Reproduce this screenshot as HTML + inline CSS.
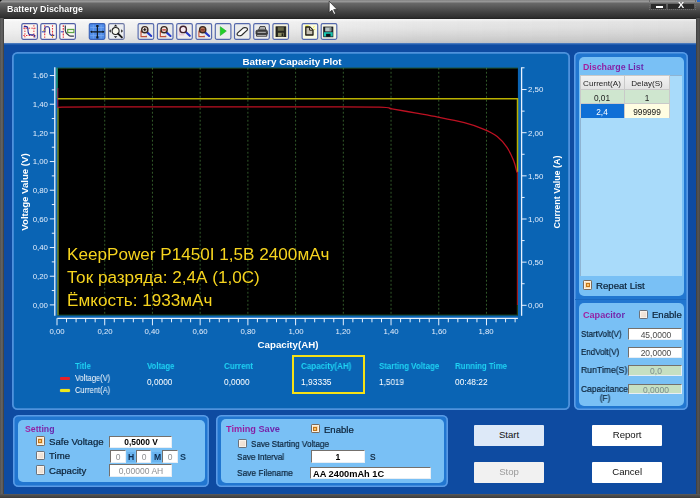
<!DOCTYPE html>
<html lang="en"><head><meta charset="utf-8"><title>Battery Discharge</title>
<style>
html,body{margin:0;padding:0}
body{width:700px;height:498px;overflow:hidden;position:relative;background:#0e4ba1;font-family:"Liberation Sans",sans-serif;font-size:8.2px}
.t{position:absolute;white-space:pre;margin:0;will-change:transform}
.b{position:absolute;box-sizing:border-box}
.p1{position:absolute;box-sizing:border-box;box-shadow:inset 0 0 0 1.8px #4f92dc;border-radius:5.5px;background:#0a64b4}
.p2{position:absolute;box-sizing:border-box;box-shadow:inset 0 0 0 1.6px #5a9be6;border-radius:5.5px;background:#2176d0}
.p3{position:absolute;box-sizing:border-box;border-radius:5px;background:#79c0f5}
.in{position:absolute;box-sizing:border-box;background:#fff;border-top:1.4px solid #74706c;border-left:1.4px solid #74706c;border-bottom:1px solid #e8eef4;border-right:1px solid #e8eef4;text-align:center;white-space:pre}
.cb{position:absolute;box-sizing:border-box;width:9.2px;height:9.3px;border:1.1px solid #6e7279;background:linear-gradient(135deg,#f6ebe2,#ecdccd);border-radius:1.2px;box-shadow:inset 0 0 0 0.8px #fbf6f0}
.cb.on{border-color:#7a6a5a;background:#f8dcae}
.cb.on::after{content:"";position:absolute;left:1.5px;top:1.6px;width:4.1px;height:4.1px;background:#f6c36c;border:1px solid #c47418;box-sizing:border-box}
.btn{position:absolute;box-sizing:border-box;background:#fff;text-align:center;font-size:9.6px;color:#111;border-radius:1px}
svg{position:absolute;left:0;top:0}
</style></head><body>
<div class="b" style="left:0.00px;top:0.00px;width:700.00px;height:18.50px;background:linear-gradient(#808080 0,#9a9a9a 7%,#8c8c8c 11%,#686868 17%,#5e5e5e 30%,#4c4c4c 52%,#3c3c3c 72%,#303030 90%,#202020 100%)"></div>
<div class="b" style="left:0.00px;top:18.00px;width:3.60px;height:480.00px;background:linear-gradient(90deg,#505050,#666 50%,#4a4a4a 85%,#2a2a2a)"></div>
<div class="b" style="left:696.00px;top:18.00px;width:4.00px;height:480.00px;background:linear-gradient(90deg,#3c3c3c,#565656 50%,#444)"></div>
<div class="b" style="left:0.00px;top:494.00px;width:700.00px;height:4.00px;background:linear-gradient(#5a5c60 0,#4e4e4e 30%,#444 70%,#3a3a3a)"></div>
<div class="b" style="left:0.00px;top:0.00px;width:3.00px;height:3.00px;background:radial-gradient(circle at 100% 100%,transparent 2.6px,#111 3.2px)"></div>
<div class="b" style="left:697.00px;top:0.00px;width:3.00px;height:3.00px;background:radial-gradient(circle at 0 100%,transparent 2.6px,#111 3.2px)"></div>
<div class="b" style="left:3.60px;top:18.50px;width:692.40px;height:25.10px;background:linear-gradient(90deg,rgba(255,255,255,0.4) 0,rgba(255,255,255,0.25) 35%,rgba(140,140,140,0.06) 60%,rgba(110,110,110,0.1) 100%),linear-gradient(#fafafa 0,#f8f8f8 4%,#eeeeee 12%,#e9e9e9 35%,#dedede 60%,#d0d0d0 85%,#c2c6cc 96%,#b4c0d2 100%)"></div>
<div class="b" style="left:3.60px;top:43.20px;width:692.40px;height:1.80px;background:linear-gradient(#5a86c4,#0e4ea6)"></div>
<div class="t" style="top:1.60px;line-height:14px;font-size:8.9px;color:#fff;font-weight:bold;left:6.80px;text-shadow:0 0 1px #222">Battery Discharge</div>
<div class="b" style="left:649.00px;top:0.00px;width:47.00px;height:10.20px;border:1px dotted #6c6c6c;border-top:none"></div>
<div class="b" style="left:651.00px;top:3.60px;width:14.50px;height:5.40px;background:#2b2b2b"></div>
<div class="b" style="left:668.00px;top:3.60px;width:25.50px;height:5.40px;background:#2b2b2b"></div>
<div class="b" style="left:655.50px;top:6.00px;width:7.00px;height:2.30px;background:#fff"></div>
<div class="t" style="top:-1.70px;line-height:14px;font-size:9.2px;color:#fff;font-weight:bold;left:580.80px;width:200px;text-align:center;">X</div>
<div class="b" style="left:697.20px;top:0.00px;width:2.80px;height:2.20px;background:#2a6ac8"></div>
<div class="p1" style="left:12.20px;top:51.80px;width:558.20px;height:358.00px;"></div>
<div class="p2" style="left:573.50px;top:52.00px;width:114.00px;height:358.00px;"></div>
<div class="b" style="left:575.00px;top:299.00px;width:111.00px;height:1.00px;background:#1a69c2"></div>
<div class="p3" style="left:579.00px;top:57.00px;width:104.50px;height:238.50px;"></div>
<div class="p3" style="left:579.00px;top:303.00px;width:104.50px;height:102.50px;"></div>
<div class="p2" style="left:13.00px;top:414.50px;width:195.50px;height:72.00px;"></div>
<div class="p2" style="left:215.50px;top:414.50px;width:232.00px;height:72.00px;"></div>
<div class="p3" style="left:17.50px;top:419.50px;width:187.00px;height:62.50px;"></div>
<div class="p3" style="left:220.50px;top:419.00px;width:223.00px;height:64.00px;"></div>
<svg width="700" height="498" viewBox="0 0 700 498">
<rect x="57.6" y="67.8" width="460.30" height="247.50" fill="#000"/>
<path d="M57.6 68.1H517.9" stroke="#2d7a4a" stroke-width="0.7" fill="none"/>
<path d="M57.6 315.0H517.9" stroke="#1d5a2a" stroke-width="0.7" fill="none"/>
<path d="M104.72 67.8V315.3" stroke="#4f8f42" stroke-opacity="0.8" stroke-width="0.8" stroke-dasharray="1.9 2.1" fill="none"/>
<path d="M152.44 67.8V315.3" stroke="#4f8f42" stroke-opacity="0.8" stroke-width="0.8" stroke-dasharray="1.9 2.1" fill="none"/>
<path d="M200.16 67.8V315.3" stroke="#4f8f42" stroke-opacity="0.8" stroke-width="0.8" stroke-dasharray="1.9 2.1" fill="none"/>
<path d="M247.88 67.8V315.3" stroke="#4f8f42" stroke-opacity="0.8" stroke-width="0.8" stroke-dasharray="1.9 2.1" fill="none"/>
<path d="M295.60 67.8V315.3" stroke="#4f8f42" stroke-opacity="0.8" stroke-width="0.8" stroke-dasharray="1.9 2.1" fill="none"/>
<path d="M343.32 67.8V315.3" stroke="#4f8f42" stroke-opacity="0.8" stroke-width="0.8" stroke-dasharray="1.9 2.1" fill="none"/>
<path d="M391.04 67.8V315.3" stroke="#4f8f42" stroke-opacity="0.8" stroke-width="0.8" stroke-dasharray="1.9 2.1" fill="none"/>
<path d="M438.76 67.8V315.3" stroke="#4f8f42" stroke-opacity="0.8" stroke-width="0.8" stroke-dasharray="1.9 2.1" fill="none"/>
<path d="M486.48 67.8V315.3" stroke="#4f8f42" stroke-opacity="0.8" stroke-width="0.8" stroke-dasharray="1.9 2.1" fill="none"/>
<path d="M57.0 67.8V98" stroke="#1f9a6a" stroke-width="1.4" fill="none"/>
<path d="M57.800000000000004 88V107" stroke="#b0205a" stroke-width="1" fill="none"/>
<path d="M58.0 107V315.3" stroke="#9ab82a" stroke-width="1.1" fill="none"/>
<path d="M57.6 98.8H517.5V172" stroke="#b9b000" stroke-width="1.5" fill="none"/>
<path d="M517.4 172V305" stroke="#a01818" stroke-width="1.2" fill="none"/>
<path d="M517.4 305V315.3" stroke="#2a3a10" stroke-width="1.2" fill="none"/>
<path d="M57.8 107.4 C58.5 107.4 55.0 107.3 62 107.2 C69.0 107.1 77.0 107.0 100 106.9 C123.0 106.8 166.7 106.8 200 106.8 C233.3 106.8 270.2 106.9 300 106.9 C329.8 107.0 363.7 106.8 379 107.1 C394.3 107.4 386.0 107.9 392 108.9 C398.0 109.9 407.3 111.5 415 112.9 C422.7 114.3 429.8 115.5 438 117.1 C446.2 118.7 456.6 120.7 464.3 122.7 C472.0 124.7 478.5 127.0 484 129.3 C489.5 131.6 493.4 133.5 497.2 136.5 C501.0 139.5 504.3 143.4 507 147.4 C509.7 151.4 511.9 156.3 513.6 160.5 C515.3 164.7 516.4 170.5 517 172.5" stroke="#bd1122" stroke-width="1.3" fill="none" stroke-linejoin="round"/>
<path d="M54.8 67.3V315.8" stroke="#e8f2ff" stroke-width="1.3" fill="none"/>
<path d="M49.8 304.90H54.8" stroke="#e8f2ff" stroke-width="1" fill="none"/>
<path d="M51.8 290.56H54.8" stroke="#e8f2ff" stroke-width="1" fill="none"/>
<path d="M49.8 276.23H54.8" stroke="#e8f2ff" stroke-width="1" fill="none"/>
<path d="M51.8 261.89H54.8" stroke="#e8f2ff" stroke-width="1" fill="none"/>
<path d="M49.8 247.56H54.8" stroke="#e8f2ff" stroke-width="1" fill="none"/>
<path d="M51.8 233.22H54.8" stroke="#e8f2ff" stroke-width="1" fill="none"/>
<path d="M49.8 218.89H54.8" stroke="#e8f2ff" stroke-width="1" fill="none"/>
<path d="M51.8 204.55H54.8" stroke="#e8f2ff" stroke-width="1" fill="none"/>
<path d="M49.8 190.22H54.8" stroke="#e8f2ff" stroke-width="1" fill="none"/>
<path d="M51.8 175.88H54.8" stroke="#e8f2ff" stroke-width="1" fill="none"/>
<path d="M49.8 161.55H54.8" stroke="#e8f2ff" stroke-width="1" fill="none"/>
<path d="M51.8 147.21H54.8" stroke="#e8f2ff" stroke-width="1" fill="none"/>
<path d="M49.8 132.88H54.8" stroke="#e8f2ff" stroke-width="1" fill="none"/>
<path d="M51.8 118.54H54.8" stroke="#e8f2ff" stroke-width="1" fill="none"/>
<path d="M49.8 104.21H54.8" stroke="#e8f2ff" stroke-width="1" fill="none"/>
<path d="M51.8 89.88H54.8" stroke="#e8f2ff" stroke-width="1" fill="none"/>
<path d="M49.8 75.54H54.8" stroke="#e8f2ff" stroke-width="1" fill="none"/>
<path d="M521.6 67.3V315.8" stroke="#e8f2ff" stroke-width="1.3" fill="none"/>
<path d="M521.6 67.8H524.5" stroke="#e8f2ff" stroke-width="1" fill="none"/>
<path d="M521.6 305.30H526.6" stroke="#e8f2ff" stroke-width="1" fill="none"/>
<path d="M521.6 283.73H524.6" stroke="#e8f2ff" stroke-width="1" fill="none"/>
<path d="M521.6 262.15H526.6" stroke="#e8f2ff" stroke-width="1" fill="none"/>
<path d="M521.6 240.58H524.6" stroke="#e8f2ff" stroke-width="1" fill="none"/>
<path d="M521.6 219.00H526.6" stroke="#e8f2ff" stroke-width="1" fill="none"/>
<path d="M521.6 197.43H524.6" stroke="#e8f2ff" stroke-width="1" fill="none"/>
<path d="M521.6 175.85H526.6" stroke="#e8f2ff" stroke-width="1" fill="none"/>
<path d="M521.6 154.28H524.6" stroke="#e8f2ff" stroke-width="1" fill="none"/>
<path d="M521.6 132.70H526.6" stroke="#e8f2ff" stroke-width="1" fill="none"/>
<path d="M521.6 111.13H524.6" stroke="#e8f2ff" stroke-width="1" fill="none"/>
<path d="M521.6 89.55H526.6" stroke="#e8f2ff" stroke-width="1" fill="none"/>
<path d="M57.300000000000004 318.3H517.9" stroke="#e8f2ff" stroke-width="1.3" fill="none"/>
<path d="M57.00 318.3V325.3" stroke="#e8f2ff" stroke-width="1" fill="none"/>
<path d="M66.54 318.3V322.3" stroke="#e8f2ff" stroke-width="1" fill="none"/>
<path d="M76.09 318.3V322.3" stroke="#e8f2ff" stroke-width="1" fill="none"/>
<path d="M85.63 318.3V322.3" stroke="#e8f2ff" stroke-width="1" fill="none"/>
<path d="M95.18 318.3V322.3" stroke="#e8f2ff" stroke-width="1" fill="none"/>
<path d="M104.72 318.3V325.3" stroke="#e8f2ff" stroke-width="1" fill="none"/>
<path d="M114.26 318.3V322.3" stroke="#e8f2ff" stroke-width="1" fill="none"/>
<path d="M123.81 318.3V322.3" stroke="#e8f2ff" stroke-width="1" fill="none"/>
<path d="M133.35 318.3V322.3" stroke="#e8f2ff" stroke-width="1" fill="none"/>
<path d="M142.90 318.3V322.3" stroke="#e8f2ff" stroke-width="1" fill="none"/>
<path d="M152.44 318.3V325.3" stroke="#e8f2ff" stroke-width="1" fill="none"/>
<path d="M161.98 318.3V322.3" stroke="#e8f2ff" stroke-width="1" fill="none"/>
<path d="M171.53 318.3V322.3" stroke="#e8f2ff" stroke-width="1" fill="none"/>
<path d="M181.07 318.3V322.3" stroke="#e8f2ff" stroke-width="1" fill="none"/>
<path d="M190.62 318.3V322.3" stroke="#e8f2ff" stroke-width="1" fill="none"/>
<path d="M200.16 318.3V325.3" stroke="#e8f2ff" stroke-width="1" fill="none"/>
<path d="M209.70 318.3V322.3" stroke="#e8f2ff" stroke-width="1" fill="none"/>
<path d="M219.25 318.3V322.3" stroke="#e8f2ff" stroke-width="1" fill="none"/>
<path d="M228.79 318.3V322.3" stroke="#e8f2ff" stroke-width="1" fill="none"/>
<path d="M238.34 318.3V322.3" stroke="#e8f2ff" stroke-width="1" fill="none"/>
<path d="M247.88 318.3V325.3" stroke="#e8f2ff" stroke-width="1" fill="none"/>
<path d="M257.42 318.3V322.3" stroke="#e8f2ff" stroke-width="1" fill="none"/>
<path d="M266.97 318.3V322.3" stroke="#e8f2ff" stroke-width="1" fill="none"/>
<path d="M276.51 318.3V322.3" stroke="#e8f2ff" stroke-width="1" fill="none"/>
<path d="M286.06 318.3V322.3" stroke="#e8f2ff" stroke-width="1" fill="none"/>
<path d="M295.60 318.3V325.3" stroke="#e8f2ff" stroke-width="1" fill="none"/>
<path d="M305.14 318.3V322.3" stroke="#e8f2ff" stroke-width="1" fill="none"/>
<path d="M314.69 318.3V322.3" stroke="#e8f2ff" stroke-width="1" fill="none"/>
<path d="M324.23 318.3V322.3" stroke="#e8f2ff" stroke-width="1" fill="none"/>
<path d="M333.78 318.3V322.3" stroke="#e8f2ff" stroke-width="1" fill="none"/>
<path d="M343.32 318.3V325.3" stroke="#e8f2ff" stroke-width="1" fill="none"/>
<path d="M352.86 318.3V322.3" stroke="#e8f2ff" stroke-width="1" fill="none"/>
<path d="M362.41 318.3V322.3" stroke="#e8f2ff" stroke-width="1" fill="none"/>
<path d="M371.95 318.3V322.3" stroke="#e8f2ff" stroke-width="1" fill="none"/>
<path d="M381.50 318.3V322.3" stroke="#e8f2ff" stroke-width="1" fill="none"/>
<path d="M391.04 318.3V325.3" stroke="#e8f2ff" stroke-width="1" fill="none"/>
<path d="M400.58 318.3V322.3" stroke="#e8f2ff" stroke-width="1" fill="none"/>
<path d="M410.13 318.3V322.3" stroke="#e8f2ff" stroke-width="1" fill="none"/>
<path d="M419.67 318.3V322.3" stroke="#e8f2ff" stroke-width="1" fill="none"/>
<path d="M429.22 318.3V322.3" stroke="#e8f2ff" stroke-width="1" fill="none"/>
<path d="M438.76 318.3V325.3" stroke="#e8f2ff" stroke-width="1" fill="none"/>
<path d="M448.30 318.3V322.3" stroke="#e8f2ff" stroke-width="1" fill="none"/>
<path d="M457.85 318.3V322.3" stroke="#e8f2ff" stroke-width="1" fill="none"/>
<path d="M467.39 318.3V322.3" stroke="#e8f2ff" stroke-width="1" fill="none"/>
<path d="M476.94 318.3V322.3" stroke="#e8f2ff" stroke-width="1" fill="none"/>
<path d="M486.48 318.3V325.3" stroke="#e8f2ff" stroke-width="1" fill="none"/>
<path d="M496.02 318.3V322.3" stroke="#e8f2ff" stroke-width="1" fill="none"/>
<path d="M505.57 318.3V322.3" stroke="#e8f2ff" stroke-width="1" fill="none"/>
<path d="M515.11 318.3V322.3" stroke="#e8f2ff" stroke-width="1" fill="none"/>
</svg>
<div class="t" style="top:298.80px;line-height:14px;font-size:7.9px;color:#e4eefc;left:-151.80px;width:200px;text-align:right;">0,00</div>
<div class="t" style="top:270.13px;line-height:14px;font-size:7.9px;color:#e4eefc;left:-151.80px;width:200px;text-align:right;">0,20</div>
<div class="t" style="top:241.46px;line-height:14px;font-size:7.9px;color:#e4eefc;left:-151.80px;width:200px;text-align:right;">0,40</div>
<div class="t" style="top:212.79px;line-height:14px;font-size:7.9px;color:#e4eefc;left:-151.80px;width:200px;text-align:right;">0,60</div>
<div class="t" style="top:184.12px;line-height:14px;font-size:7.9px;color:#e4eefc;left:-151.80px;width:200px;text-align:right;">0,80</div>
<div class="t" style="top:155.45px;line-height:14px;font-size:7.9px;color:#e4eefc;left:-151.80px;width:200px;text-align:right;">1,00</div>
<div class="t" style="top:126.78px;line-height:14px;font-size:7.9px;color:#e4eefc;left:-151.80px;width:200px;text-align:right;">1,20</div>
<div class="t" style="top:98.11px;line-height:14px;font-size:7.9px;color:#e4eefc;left:-151.80px;width:200px;text-align:right;">1,40</div>
<div class="t" style="top:69.44px;line-height:14px;font-size:7.9px;color:#e4eefc;left:-151.80px;width:200px;text-align:right;">1,60</div>
<div class="t" style="top:299.20px;line-height:14px;font-size:7.9px;color:#e4eefc;left:528.00px;">0,00</div>
<div class="t" style="top:256.05px;line-height:14px;font-size:7.9px;color:#e4eefc;left:528.00px;">0,50</div>
<div class="t" style="top:212.90px;line-height:14px;font-size:7.9px;color:#e4eefc;left:528.00px;">1,00</div>
<div class="t" style="top:169.75px;line-height:14px;font-size:7.9px;color:#e4eefc;left:528.00px;">1,50</div>
<div class="t" style="top:126.60px;line-height:14px;font-size:7.9px;color:#e4eefc;left:528.00px;">2,00</div>
<div class="t" style="top:83.45px;line-height:14px;font-size:7.9px;color:#e4eefc;left:528.00px;">2,50</div>
<div class="t" style="top:324.60px;line-height:14px;font-size:7.8px;color:#e4eefc;left:-43.00px;width:200px;text-align:center;">0,00</div>
<div class="t" style="top:324.60px;line-height:14px;font-size:7.8px;color:#e4eefc;left:4.72px;width:200px;text-align:center;">0,20</div>
<div class="t" style="top:324.60px;line-height:14px;font-size:7.8px;color:#e4eefc;left:52.44px;width:200px;text-align:center;">0,40</div>
<div class="t" style="top:324.60px;line-height:14px;font-size:7.8px;color:#e4eefc;left:100.16px;width:200px;text-align:center;">0,60</div>
<div class="t" style="top:324.60px;line-height:14px;font-size:7.8px;color:#e4eefc;left:147.88px;width:200px;text-align:center;">0,80</div>
<div class="t" style="top:324.60px;line-height:14px;font-size:7.8px;color:#e4eefc;left:195.60px;width:200px;text-align:center;">1,00</div>
<div class="t" style="top:324.60px;line-height:14px;font-size:7.8px;color:#e4eefc;left:243.32px;width:200px;text-align:center;">1,20</div>
<div class="t" style="top:324.60px;line-height:14px;font-size:7.8px;color:#e4eefc;left:291.04px;width:200px;text-align:center;">1,40</div>
<div class="t" style="top:324.60px;line-height:14px;font-size:7.8px;color:#e4eefc;left:338.76px;width:200px;text-align:center;">1,60</div>
<div class="t" style="top:324.60px;line-height:14px;font-size:7.8px;color:#e4eefc;left:386.48px;width:200px;text-align:center;">1,80</div>
<div class="t" style="top:54.60px;line-height:14px;font-size:9.85px;color:#fff;font-weight:bold;left:192.00px;width:200px;text-align:center;">Battery Capacity Plot</div>
<div class="t" style="top:337.60px;line-height:14px;font-size:9.7px;color:#fff;font-weight:bold;left:187.50px;width:200px;text-align:center;">Capacity(AH)</div>
<div class="t" style="top:185.30px;line-height:14px;font-size:9.65px;color:#fff;font-weight:bold;left:-75.20px;width:200px;text-align:center;transform:rotate(-90deg);">Voltage Value (V)</div>
<div class="t" style="top:184.80px;line-height:14px;font-size:8.95px;color:#fff;font-weight:bold;left:457.20px;width:200px;text-align:center;transform:rotate(-90deg);">Current Value (A)</div>
<div class="t" style="top:248.00px;line-height:14px;font-size:15.8px;color:#f6d41e;left:67.30px;transform-origin:0 50%;transform:scaleX(1.084);">KeepPower P1450I 1,5В 2400мАч</div>
<div class="t" style="top:271.00px;line-height:14px;font-size:15.8px;color:#f6d41e;left:67.30px;transform-origin:0 50%;transform:scaleX(1.084);">Ток разряда: 2,4А (1,0С)</div>
<div class="t" style="top:294.00px;line-height:14px;font-size:15.8px;color:#f6d41e;left:67.30px;transform-origin:0 50%;transform:scaleX(1.084);">Ёмкость: 1933мАч</div>
<div class="t" style="top:359.00px;line-height:14px;font-size:8.6px;color:#1fd4f4;font-weight:bold;left:74.50px;transform-origin:0 50%;transform:scaleX(0.902);">Title</div>
<div class="t" style="top:359.00px;line-height:14px;font-size:8.6px;color:#1fd4f4;font-weight:bold;left:146.90px;transform-origin:0 50%;transform:scaleX(0.904);">Voltage</div>
<div class="t" style="top:359.00px;line-height:14px;font-size:8.6px;color:#1fd4f4;font-weight:bold;left:223.70px;transform-origin:0 50%;transform:scaleX(0.934);">Current</div>
<div class="t" style="top:359.00px;line-height:14px;font-size:8.6px;color:#1fd4f4;font-weight:bold;left:300.70px;transform-origin:0 50%;transform:scaleX(0.932);">Capacity(AH)</div>
<div class="t" style="top:359.00px;line-height:14px;font-size:8.6px;color:#1fd4f4;font-weight:bold;left:378.70px;transform-origin:0 50%;transform:scaleX(0.923);">Starting Voltage</div>
<div class="t" style="top:359.00px;line-height:14px;font-size:8.6px;color:#1fd4f4;font-weight:bold;left:455.00px;transform-origin:0 50%;transform:scaleX(0.911);">Running Time</div>
<div class="t" style="top:371.20px;line-height:14px;font-size:8.4px;color:#fff;left:74.50px;transform-origin:0 50%;transform:scaleX(0.900);">Voltage(V)</div>
<div class="t" style="top:383.20px;line-height:14px;font-size:8.4px;color:#fff;left:74.50px;transform-origin:0 50%;transform:scaleX(0.900);">Current(A)</div>
<div class="b" style="left:60.20px;top:377.00px;width:10.00px;height:2.70px;background:#e8202a;border-radius:1px"></div>
<div class="b" style="left:60.20px;top:389.00px;width:10.00px;height:2.80px;background:#ece81a;border-radius:1px;box-shadow:0 0 0 0.5px #3a70b0"></div>
<div class="t" style="top:374.90px;line-height:14px;font-size:8.3px;color:#fff;left:146.90px;transform-origin:0 50%;transform:scaleX(0.997);">0,0000</div>
<div class="t" style="top:374.90px;line-height:14px;font-size:8.3px;color:#fff;left:223.70px;transform-origin:0 50%;transform:scaleX(1.008);">0,0000</div>
<div class="t" style="top:374.90px;line-height:14px;font-size:8.4px;color:#fff;left:301.40px;transform-origin:0 50%;transform:scaleX(1.008);">1,93335</div>
<div class="t" style="top:374.90px;line-height:14px;font-size:8.4px;color:#fff;left:378.70px;transform-origin:0 50%;transform:scaleX(0.977);">1,5019</div>
<div class="t" style="top:374.90px;line-height:14px;font-size:8.4px;color:#fff;left:455.00px;transform-origin:0 50%;transform:scaleX(1.000);">00:48:22</div>
<div class="b" style="left:292.40px;top:355.40px;width:72.30px;height:39.00px;border:2.8px solid #f5e116"></div>
<div class="t" style="top:60.10px;line-height:14px;font-size:8.8px;color:#7a1aa6;font-weight:bold;left:583.00px;background:linear-gradient(90deg,#a81b9c,#6424ac);-webkit-background-clip:text;background-clip:text;-webkit-text-fill-color:transparent;">Discharge List</div>
<div class="b" style="left:580.00px;top:75.00px;width:101.50px;height:200.50px;background:#a9dbfa;border-top:1px solid #8fb4d2;border-left:1px solid #8fb4d2"></div>
<div class="b" style="left:580.00px;top:75.00px;width:89.50px;height:43.00px;background:#c9c9c9"></div>
<div class="b" style="left:580.60px;top:75.60px;width:43.40px;height:13.40px;background:linear-gradient(#f2f2f2,#e2e2e2)"></div>
<div class="b" style="left:624.80px;top:75.60px;width:44.20px;height:13.40px;background:linear-gradient(#f2f2f2,#e2e2e2)"></div>
<div class="b" style="left:580.60px;top:89.60px;width:43.40px;height:13.80px;background:#cfe6cf"></div>
<div class="b" style="left:624.80px;top:89.60px;width:44.20px;height:13.80px;background:#cfe6cf"></div>
<div class="b" style="left:580.60px;top:104.00px;width:43.40px;height:13.60px;background:#0f6fd6"></div>
<div class="b" style="left:624.80px;top:104.00px;width:44.20px;height:13.60px;background:#fffde2"></div>
<div class="t" style="top:76.80px;line-height:14px;font-size:8.1px;color:#222;left:502.30px;width:200px;text-align:center;">Current(A)</div>
<div class="t" style="top:76.80px;line-height:14px;font-size:8.1px;color:#222;left:547.00px;width:200px;text-align:center;">Delay(S)</div>
<div class="t" style="top:90.70px;line-height:14px;font-size:8.3px;color:#222;left:502.30px;width:200px;text-align:center;">0,01</div>
<div class="t" style="top:90.70px;line-height:14px;font-size:8.3px;color:#222;left:547.00px;width:200px;text-align:center;">1</div>
<div class="t" style="top:104.90px;line-height:14px;font-size:8.3px;color:#fff;left:502.30px;width:200px;text-align:center;">2,4</div>
<div class="t" style="top:104.90px;line-height:14px;font-size:8.3px;color:#111;left:547.00px;width:200px;text-align:center;">999999</div>
<div class="cb on" style="left:583.1px;top:280.3px"></div>
<div class="t" style="top:278.80px;line-height:14px;font-size:9.65px;color:#0c2238;left:596.40px;-webkit-text-stroke:0.22px #0c2238;">Repeat List</div>
<div class="t" style="top:308.40px;line-height:14px;font-size:9.1px;color:#7a1aa6;font-weight:bold;left:583.00px;background:linear-gradient(90deg,#a81b9c,#6424ac);-webkit-background-clip:text;background-clip:text;-webkit-text-fill-color:transparent;">Capacitor</div>
<div class="cb" style="left:639.2px;top:310px"></div>
<div class="t" style="top:308.20px;line-height:14px;font-size:9.55px;color:#0c2238;left:652.40px;-webkit-text-stroke:0.22px #0c2238;">Enable</div>
<div class="t" style="top:326.50px;line-height:14px;font-size:9.5px;color:#0c2238;left:580.80px;-webkit-text-stroke:0.22px #0c2238;transform-origin:0 50%;transform:scaleX(0.836);">StartVolt(V)</div>
<div class="t" style="top:345.00px;line-height:14px;font-size:9.5px;color:#0c2238;left:580.80px;-webkit-text-stroke:0.22px #0c2238;transform-origin:0 50%;transform:scaleX(0.841);">EndVolt(V)</div>
<div class="t" style="top:363.40px;line-height:14px;font-size:9.5px;color:#0c2238;left:580.80px;-webkit-text-stroke:0.22px #0c2238;transform-origin:0 50%;transform:scaleX(0.909);">RunTime(S)</div>
<div class="t" style="top:381.60px;line-height:14px;font-size:9.5px;color:#0c2238;left:580.80px;-webkit-text-stroke:0.22px #0c2238;transform-origin:0 50%;transform:scaleX(0.888);">Capacitance</div>
<div class="t" style="top:390.90px;line-height:14px;font-size:9.5px;color:#0c2238;left:504.60px;width:200px;text-align:center;-webkit-text-stroke:0.22px #0c2238;transform:scaleX(0.874);">(F)</div>
<div class="in" style="left:628.00px;top:328.40px;width:54.40px;height:11.30px;background:#fff;"></div>
<div class="t" style="top:327.55px;line-height:14px;font-size:8.5px;color:#4a4a4a;left:555.50px;width:200px;text-align:center;">45,0000</div>
<div class="in" style="left:628.00px;top:346.90px;width:54.40px;height:11.20px;background:#fff;"></div>
<div class="t" style="top:346.00px;line-height:14px;font-size:8.5px;color:#4a4a4a;left:555.50px;width:200px;text-align:center;">20,0000</div>
<div class="in" style="left:628.00px;top:365.30px;width:54.40px;height:11.00px;background:#c6e0c2;"></div>
<div class="t" style="top:364.30px;line-height:14px;font-size:8.5px;color:#7c8c8c;left:555.50px;width:200px;text-align:center;">0,0</div>
<div class="in" style="left:628.00px;top:383.80px;width:54.40px;height:10.50px;background:#c6e0c2;"></div>
<div class="t" style="top:382.95px;line-height:14px;font-size:8.5px;color:#7c8c8c;left:555.50px;width:200px;text-align:center;">0,0000</div>
<div class="t" style="top:422.20px;line-height:14px;font-size:8.7px;color:#7a1aa6;font-weight:bold;left:24.60px;background:linear-gradient(90deg,#a81b9c,#6424ac);-webkit-background-clip:text;background-clip:text;-webkit-text-fill-color:transparent;">Setting</div>
<div class="cb on" style="left:35.9px;top:436.4px"></div>
<div class="cb" style="left:35.9px;top:450.9px"></div>
<div class="cb" style="left:35.9px;top:465.3px"></div>
<div class="t" style="top:435.00px;line-height:14px;font-size:9.65px;color:#0c2238;left:49.20px;-webkit-text-stroke:0.22px #0c2238;">Safe Voltage</div>
<div class="t" style="top:448.80px;line-height:14px;font-size:9.6px;color:#0c2238;left:49.00px;-webkit-text-stroke:0.22px #0c2238;">Time</div>
<div class="t" style="top:463.50px;line-height:14px;font-size:9.6px;color:#0c2238;left:49.00px;-webkit-text-stroke:0.22px #0c2238;">Capacity</div>
<div class="in" style="left:109.40px;top:436.10px;width:62.90px;height:11.70px;background:#fff;"></div>
<div class="t" style="top:435.45px;line-height:14px;font-size:8.4px;color:#000;font-weight:bold;left:41.15px;width:200px;text-align:center;">0,5000 V</div>
<div class="b" style="left:126.60px;top:451.60px;width:8.80px;height:10.80px;background:#69b3ee"></div>
<div class="b" style="left:152.00px;top:451.60px;width:9.40px;height:10.80px;background:#69b3ee"></div>
<div class="in" style="left:109.70px;top:450.20px;width:16.40px;height:12.80px;background:#fff;"></div>
<div class="t" style="top:449.80px;line-height:14px;font-size:8.5px;color:#8d8f92;left:18.20px;width:200px;text-align:center;">0</div>
<div class="in" style="left:135.70px;top:450.20px;width:15.80px;height:12.80px;background:#fff;"></div>
<div class="t" style="top:449.80px;line-height:14px;font-size:8.5px;color:#8d8f92;left:43.90px;width:200px;text-align:center;">0</div>
<div class="in" style="left:161.70px;top:450.20px;width:16.60px;height:12.80px;background:#fff;"></div>
<div class="t" style="top:449.80px;line-height:14px;font-size:8.5px;color:#8d8f92;left:70.30px;width:200px;text-align:center;">0</div>
<div class="t" style="top:449.90px;line-height:14px;font-size:8.6px;color:#0c2a4c;font-weight:bold;left:127.90px;">H</div>
<div class="t" style="top:449.90px;line-height:14px;font-size:8.6px;color:#0c2a4c;font-weight:bold;left:153.60px;">M</div>
<div class="t" style="top:449.90px;line-height:14px;font-size:9.0px;color:#103a60;font-weight:bold;left:179.80px;">S</div>
<div class="in" style="left:109.40px;top:463.80px;width:62.90px;height:13.30px;background:#fff;"></div>
<div class="t" style="top:464.05px;line-height:14px;font-size:8.5px;color:#8d8f92;left:41.15px;width:200px;text-align:center;">0,00000 AH</div>
<div class="t" style="top:421.80px;line-height:14px;font-size:9.2px;color:#7a1aa6;font-weight:bold;left:226.30px;background:linear-gradient(90deg,#a81b9c,#6424ac);-webkit-background-clip:text;background-clip:text;-webkit-text-fill-color:transparent;">Timing Save</div>
<div class="cb on" style="left:310.9px;top:424.2px"></div>
<div class="t" style="top:422.60px;line-height:14px;font-size:9.55px;color:#0c2238;left:324.20px;-webkit-text-stroke:0.22px #0c2238;">Enable</div>
<div class="cb" style="left:238.2px;top:438.6px"></div>
<div class="t" style="top:436.90px;line-height:14px;font-size:9.6px;color:#0c2238;left:250.90px;-webkit-text-stroke:0.22px #0c2238;transform-origin:0 50%;transform:scaleX(0.845);">Save Starting Voltage</div>
<div class="t" style="top:450.00px;line-height:14px;font-size:9.6px;color:#0c2238;left:237.10px;-webkit-text-stroke:0.22px #0c2238;transform-origin:0 50%;transform:scaleX(0.842);">Save Interval</div>
<div class="t" style="top:466.20px;line-height:14px;font-size:9.6px;color:#0c2238;left:237.10px;-webkit-text-stroke:0.22px #0c2238;transform-origin:0 50%;transform:scaleX(0.871);">Save Filename</div>
<div class="in" style="left:310.60px;top:450.00px;width:54.80px;height:13.00px;background:#fff;"></div>
<div class="t" style="top:450.00px;line-height:14px;font-size:8.6px;color:#000;font-weight:bold;left:238.30px;width:200px;text-align:center;">1</div>
<div class="t" style="top:449.80px;line-height:14px;font-size:8.3px;color:#0c2238;left:369.80px;-webkit-text-stroke:0.22px #0c2238;">S</div>
<div class="in" style="left:309.60px;top:466.80px;width:121.40px;height:12.40px;background:#fff;"></div>
<div class="t" style="top:466.50px;line-height:14px;font-size:9.25px;color:#000;font-weight:bold;left:312.60px;">AA 2400mAh 1C</div>
<div class="btn" style="left:474.2px;top:425.2px;width:69.8px;height:20.6px;line-height:20.6px;background:#dde9f8;color:#111">Start</div>
<div class="btn" style="left:474.2px;top:462.4px;width:69.8px;height:20.2px;line-height:20.2px;background:#f1f1f1;color:#9a9a9a">Stop</div>
<div class="btn" style="left:592.3px;top:425.2px;width:69.7px;height:20.6px;line-height:20.6px;background:#fff;color:#111">Report</div>
<div class="btn" style="left:592.3px;top:462.4px;width:69.7px;height:20.2px;line-height:20.2px;background:#fff;color:#111">Cancel</div>
<svg width="700" height="498" viewBox="0 0 700 498">
<g transform="translate(21.30 23.2)">
<rect x="0.5" y="0.4" width="15.6" height="15.7" rx="1.5" fill="#fbf8f0" stroke="#505ea6" stroke-width="1.15"/>
<path d="M2 5H14.5M2 12.3H14.5M3.6 2V14.5M12.6 2V14.5" stroke="#e03040" stroke-width="1" stroke-dasharray="1.4 1.3" fill="none"/>
<path d="M2.5 3.4H5.2C7 3.4 6.6 6 6.8 8.5C7 11 7.6 11.6 9.5 11.7H12.4C13.6 11.8 13.4 13 13.6 14.3" stroke="#2a2a9a" stroke-width="1.1" fill="none"/>
</g>
<g transform="translate(40.30 23.2)">
<rect x="0.5" y="0.4" width="15.6" height="15.7" rx="1.5" fill="#fbf8f0" stroke="#505ea6" stroke-width="1.15"/>
<path d="M4.4 2V14.5M12.2 2V14.5" stroke="#e03040" stroke-width="1.1" stroke-dasharray="1.6 1.2" fill="none"/>
<path d="M1.5 8.6H4.4" stroke="#3050d0" stroke-width="1.1" fill="none"/>
<path d="M4.6 9V4.6C4.6 3.6 5 3.5 6.2 3.5H8C9.2 3.6 9.2 4.6 9.3 6.5V9.5C9.4 11.2 10 12 11.4 12.2H14" stroke="#2a2a9a" stroke-width="1.1" fill="none"/>
<path d="M3.6 6.5V8M12.2 12.4V14" stroke="#e0b020" stroke-width="1.2" fill="none"/>
</g>
<g transform="translate(59.30 23.2)">
<rect x="0.5" y="0.4" width="15.6" height="15.7" rx="1.5" fill="#fbf8f4" stroke="#505ea6" stroke-width="1.15"/>
<path d="M4 2V14.5" stroke="#e03040" stroke-width="1.2" stroke-dasharray="1.8 1" fill="none"/>
<path d="M1.5 8.6H4" stroke="#3050d0" stroke-width="1.1" fill="none"/>
<path d="M6 2.2V7C6.1 9.6 7 10.4 8.4 11.2C9.4 12.4 10 13 11.4 13H14.6" stroke="#303848" stroke-width="1.2" fill="none"/>
<rect x="8.4" y="6.2" width="6.2" height="3.2" fill="#eef4e0" stroke="#58a040" stroke-width="1.1"/>
</g>
<g transform="translate(88.80 23.2)">
<rect x="0.5" y="0.4" width="15.6" height="15.7" rx="1.5" fill="#4f8ce8" stroke="#3a62b8" stroke-width="1.15"/>
<path d="M1.5 4.3H15.3M1.5 12.3H15.3M4.5 1.5V15.3M12.3 1.5V15.3" stroke="#78a8f0" stroke-width="0.8" fill="none"/>
<path d="M2 8.6H15M8.6 2V15" stroke="#101820" stroke-width="1.15" fill="none"/>
<path d="M1.4 8.6L3.2 7.3V9.9ZM15.6 8.6L13.8 7.3V9.9Z" fill="#101820"/>
<rect x="7.5" y="1.8" width="2.2" height="2" fill="#101820"/><rect x="7.5" y="13.2" width="2.2" height="2" fill="#101820"/>
</g>
<g transform="translate(108.10 23.2)">
<rect x="0.5" y="0.4" width="15.6" height="15.7" rx="1.5" fill="#eceef0" stroke="#6a76a4" stroke-width="1.15"/>
<circle cx="7.5" cy="7.8" r="3.5" fill="#fafaf0" stroke="#202020" stroke-width="1.05"/>
<path d="M10 10.4L13.8 14.2" stroke="#181818" stroke-width="1.9" stroke-linecap="round" fill="none"/>
<path d="M7.5 1.4L9.3 3.2H5.7ZM7.5 14.9L9.3 13.1H5.7ZM0.9 7.8L2.7 6V9.6ZM14.9 7.8L13.1 6V9.6Z" fill="#181818"/>
</g>
<g transform="translate(137.60 23.2)">
<rect x="0.5" y="0.4" width="15.6" height="15.7" rx="1.5" fill="#e9eaea" stroke="#5468ac" stroke-width="1.15"/>
<path d="M3.6 7.4V13.2H9.4" stroke="#c05038" stroke-width="1.5" fill="none"/>
<path d="M4.6 9.5V12.2H8" stroke="#f4e8e0" stroke-width="1.2" fill="none"/>
<path d="M9.6 9.2L13.6 12.8" stroke="#2438c8" stroke-width="2.1" stroke-linecap="round" fill="none"/>
<circle cx="7.2" cy="6.5" r="3.1" fill="#f8f0ec" stroke="#3a2820" stroke-width="1.4"/>
<path d="M5.6 6.5H8.8M7.2 4.9V8.1" stroke="#181010" stroke-width="1.1" fill="none"/>
</g>
<g transform="translate(156.90 23.2)">
<rect x="0.5" y="0.4" width="15.6" height="15.7" rx="1.5" fill="#e9eaea" stroke="#5468ac" stroke-width="1.15"/>
<path d="M3.6 7.4V13.2H9.4" stroke="#c05038" stroke-width="1.5" fill="none"/>
<path d="M4.6 9.5V12.2H8" stroke="#f4e8e0" stroke-width="1.2" fill="none"/>
<path d="M9.6 9.2L13.6 12.8" stroke="#2438c8" stroke-width="2.1" stroke-linecap="round" fill="none"/>
<circle cx="7.2" cy="6.5" r="3.1" fill="#f4e4dc" stroke="#3a2820" stroke-width="1.4"/>
<path d="M5.4 6.7H9" stroke="#c03028" stroke-width="1.3" fill="none"/>
</g>
<g transform="translate(176.20 23.2)">
<rect x="0.5" y="0.4" width="15.6" height="15.7" rx="1.5" fill="#eeeceb" stroke="#5468ac" stroke-width="1.15"/>
<path d="M3.2 5.4V11.6H8" stroke="#e8c8d8" stroke-width="1.4" fill="none"/>
<path d="M9.6 8.8L13.6 12.6" stroke="#2438c8" stroke-width="2.1" stroke-linecap="round" fill="none"/>
<circle cx="7" cy="6.2" r="3.2" fill="#f6e8f0" stroke="#40202c" stroke-width="1.4"/>
</g>
<g transform="translate(195.50 23.2)">
<rect x="0.5" y="0.4" width="15.6" height="15.7" rx="1.5" fill="#e9eaea" stroke="#5468ac" stroke-width="1.15"/>
<path d="M3.6 7.4V13.2H9.4" stroke="#c05038" stroke-width="1.5" fill="none"/>
<path d="M4.6 9.5V12.2H8" stroke="#f4e8e0" stroke-width="1.2" fill="none"/>
<path d="M9.6 9.2L13.6 12.8" stroke="#2438c8" stroke-width="2.1" stroke-linecap="round" fill="none"/>
<circle cx="7.2" cy="6.5" r="3.1" fill="#b87858" stroke="#3a2820" stroke-width="1.4"/>
<path d="M5.2 6.4H9.2M5.8 7.8H8.6" stroke="#8a4030" stroke-width="1.2" fill="none"/>
</g>
<g transform="translate(214.80 23.2)">
<rect x="0.5" y="0.4" width="15.6" height="15.7" rx="1.5" fill="#ebecec" stroke="#5468ac" stroke-width="1.15"/>
<path d="M5.5 3.5L11.5 7.9L5.5 12.3Z" fill="#22d028" stroke="#1aa820" stroke-width="0.6"/>
</g>
<g transform="translate(234.00 23.2)">
<rect x="0.5" y="0.4" width="15.6" height="15.7" rx="1.5" fill="#ebecec" stroke="#5468ac" stroke-width="1.15"/>
<path d="M3.2 10.2L9 4.9Q10.2 4 12.2 4.6Q14 5.4 13.2 6.9L7.6 12Q6.2 12.9 4.2 12.3Q2.6 11.5 3.2 10.2Z" fill="#fbfbfb" stroke="#2a2a2a" stroke-width="1.2" stroke-linejoin="round"/>
</g>
<g transform="translate(253.20 23.2)">
<rect x="0.5" y="0.4" width="15.6" height="15.7" rx="1.5" fill="#ebecec" stroke="#5468ac" stroke-width="1.15"/>
<path d="M5.4 7L6.8 3.4H11.8L12.8 7Z" fill="#f2f2f2" stroke="#383838" stroke-width="1"/>
<path d="M6.8 4.8H11.4M6.4 6H11.8" stroke="#585858" stroke-width="0.7" fill="none"/>
<path d="M2.8 8.2Q2.8 7 4 7H13Q14.2 7 14.2 8.2V11H2.8Z" fill="#4a4a4a" stroke="#2a2a2a" stroke-width="0.8"/>
<path d="M3.4 11.2H13.6V13H3.4Z" fill="#d8d8d8" stroke="#2a2a2a" stroke-width="0.9"/>
<path d="M4.4 9.2H12.6" stroke="#c8c8c8" stroke-width="0.8" fill="none"/>
</g>
<g transform="translate(272.40 23.2)">
<rect x="0.5" y="0.4" width="15.6" height="15.7" rx="1.5" fill="#f6f3df" stroke="#5468ac" stroke-width="1.15"/>
<rect x="3.6" y="3.6" width="9.8" height="9.8" fill="#282820" stroke="#181810" stroke-width="0.8"/>
<rect x="5.4" y="4" width="6" height="3.6" fill="#686848"/>
<rect x="5.6" y="9.6" width="5.8" height="3.6" fill="#8c8c60"/>
<rect x="9.2" y="10.2" width="1.6" height="2.6" fill="#202018"/>
</g>
<g transform="translate(301.60 23.2)">
<rect x="0.5" y="0.4" width="15.6" height="15.7" rx="1.5" fill="#fbfbe2" stroke="#5468ac" stroke-width="1.15"/>
<path d="M3.8 3.2L7 2.6" stroke="#f0f040" stroke-width="1.6" fill="none"/>
<path d="M4.2 3.8H8.2L11.4 6.8V11.8H4.2Z" fill="#c4beb0" stroke="#201c10" stroke-width="1.3" stroke-linejoin="round"/>
<path d="M8 4V7H11.2" fill="#f0f0e4" stroke="#201c10" stroke-width="1"/>
<path d="M11.4 4.2L13 3.4M12.4 6.2H13.6" stroke="#f0f040" stroke-width="1" fill="none"/>
</g>
<g transform="translate(320.70 23.2)">
<rect x="0.5" y="0.4" width="15.6" height="15.7" rx="1.5" fill="#f5f5e6" stroke="#5468ac" stroke-width="1.15"/>
<rect x="3" y="3.8" width="9.2" height="9.8" fill="#202428" stroke="#14181c" stroke-width="0.8"/>
<rect x="4.5" y="4.2" width="6.2" height="4" fill="#b8c4c4"/>
<rect x="8.8" y="4.6" width="1.4" height="3" fill="#808c8c"/>
<path d="M3.2 9H12V13.2H3.2Z" fill="#18c4b0"/>
<rect x="5.4" y="10.6" width="4.4" height="3" fill="#101418"/>
</g>
<path d="M329.2 1.2V12.6L332 10.2L333.9 14.4L335.6 13.6L333.7 9.6H337.2Z" fill="#fff" stroke="#222" stroke-width="0.7" stroke-linejoin="round"/>
</svg>
</body></html>
